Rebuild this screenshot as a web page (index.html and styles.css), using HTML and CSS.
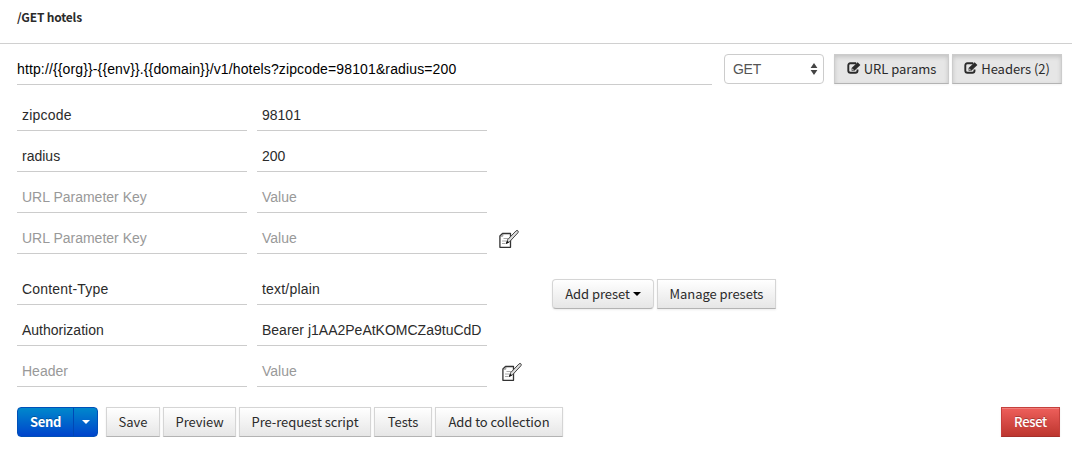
FILE: index.html
```html
<!DOCTYPE html>
<html lang="en">
<head>
<meta charset="utf-8">
<title>Request builder</title>
<link rel="stylesheet" href="styles.css">
</head>
<body>
<svg class="defs" width="0" height="0" aria-hidden="true">
  <symbol id="edit" viewBox="0 0 14 12">
    <path d="M9.2 1.3H3.4Q1.3 1.3 1.3 3.4V8.7Q1.3 10.8 3.4 10.8H8.4Q10.5 10.8 10.5 8.7V7.6" fill="none" stroke="currentColor" stroke-width="1.9"/>
    <path d="M4.6 8.8V6L10.6.3 13.4 3 7.4 8.8z" fill="currentColor"/>
    <path d="M5.6 6.7V7.9H6.8" fill="none" stroke="#e6e6e6" stroke-width=".7"/>
  </symbol>
  <symbol id="bulk" viewBox="0 0 20 20">
    <path d="M3.5 4.5H11.5V18.3H.9V7z" fill="#fff" stroke="#333" stroke-width="1.3" stroke-linejoin="round"/>
    <path d="M3.8 4.8V7.2H1.2" fill="none" stroke="#777" stroke-width=".8"/>
    <path d="M4.5 9.5H9M3 12H7M3 14.5H6.5" stroke="#aaa" stroke-width="1"/>
    <path d="M7.3 14.5 8.5 10.8 17 1.9Q18.2 1 19 1.9 19.7 2.8 18.9 3.8L10.5 12.8z" fill="#ddd" stroke="#444" stroke-width="1"/>
    <path d="M7 14.9 8.2 11.7 10 13.3z" fill="#111"/>
  </symbol>
</svg>
<header class="title">/GET hotels</header>
<main class="builder">
  <section class="request">
    <div class="url">http://{{org}}-{{env}}.{{domain}}/v1/hotels?zipcode=98101&amp;radius=200</div>
    <div class="method">GET<svg class="updown" viewBox="0 0 8 12"><path d="M4 0 7.4 5H.6zM4 12 .6 7H7.4z" fill="#444"/></svg></div>
    <div class="btn pressed params"><svg class="edit"><use href="#edit"/></svg><span>URL params</span></div>
    <div class="btn pressed headers"><svg class="edit"><use href="#edit"/></svg><span>Headers (2)</span></div>
  </section>
  <section class="editor">
    <div class="pairs">
      <div class="field wide">zipcode</div><div class="field">98101</div>
      <div class="field">radius</div><div class="field">200</div>
      <div class="field empty">URL Parameter Key</div><div class="field empty">Value</div>
      <div class="field empty">URL Parameter Key</div><div class="field empty">Value</div>
    </div>
    <svg class="bulk"><use href="#bulk"/></svg>
  </section>
  <section class="editor second">
    <div class="pairs">
      <div class="field wide">Content-Type</div><div class="field wide">text/plain</div>
      <div class="field">Authorization</div><div class="field">Bearer j1AA2PeAtKOMCZa9tuCdD</div>
      <div class="field empty">Header</div><div class="field empty">Value</div>
    </div>
    <svg class="bulk low"><use href="#bulk"/></svg>
    <div class="presets">
      <div class="btn add"><span>Add preset</span><i class="caret"></i></div>
      <div class="btn manage"><span>Manage presets</span></div>
    </div>
  </section>
  <footer class="actions">
    <div class="send"><b class="send-label">Send</b><span class="send-menu"><i class="caret"></i></span></div>
    <div class="btn save"><span>Save</span></div>
    <div class="btn preview"><span>Preview</span></div>
    <div class="btn script"><span>Pre-request script</span></div>
    <div class="btn tests"><span>Tests</span></div>
    <div class="btn collect"><span>Add to collection</span></div>
    <div class="btn reset"><span>Reset</span></div>
  </footer>
</main>
</body>
</html>
```
FILE: styles.css
```css
* { box-sizing: border-box; }
body {
  margin: 0;
  background: #fff;
  color: #2b2b2b;
  font: 14px/20px "Liberation Sans", Arial, sans-serif;
}
.defs { position: absolute; }
.title {
  height: 44px;
  padding: 7px 17px 0;
  border-bottom: 1px solid #d0d0d0;
  font: bold 12px/20px "Noto Sans CJK SC", sans-serif;
  letter-spacing: -.2px;
}
.builder { padding: 10px 10px 0 17px; }
.request { display: flex; align-items: flex-start; height: 46px; }
.url {
  width: 695px;
  height: 31px;
  margin-right: 12px;
  padding-top: 5px;
  border-bottom: 1px solid #ccc;
  color: #000;
  letter-spacing: .13px;
  white-space: nowrap;
}
.method {
  display: flex;
  justify-content: space-between;
  width: 100px;
  height: 30px;
  margin-right: 10px;
  padding: 4px 5px 0 8px;
  border: 1px solid #ccc;
  border-radius: 4px;
  color: #555;
  letter-spacing: -.3px;
}
.updown { width: 8px; height: 12px; margin-top: 4px; }
.btn {
  display: flex;
  align-items: center;
  justify-content: center;
  flex: none;
  height: 30px;
  border: 1px solid #d5d5d5;
  border-bottom-color: #b3b3b3;
  background: linear-gradient(#fff, #e6e6e6);
  box-shadow: inset 0 1px 0 rgba(255,255,255,.2), 0 1px 2px rgba(0,0,0,.08);
  font: 13px/20px "Noto Sans CJK SC", sans-serif;
  letter-spacing: -.05px;
  white-space: nowrap;
}
.pressed {
  border-color: #ccc;
  border-bottom-color: #b3b3b3;
  background: #e6e6e6;
  box-shadow: inset 0 2px 4px rgba(0,0,0,.15), 0 1px 2px rgba(0,0,0,.05);
}
.edit { width: 14px; height: 12px; margin: -2px 3px 0 0; }
.params { width: 115px; margin-right: 3px; }
.headers { width: 110px; }
.editor { display: flex; align-items: flex-start; }
.pairs { display: grid; grid-template-columns: 230px 230px; column-gap: 10px; row-gap: 10px; }
.field {
  height: 31px;
  padding: 5px 5px 0;
  border-bottom: 1px solid #ccc;
  overflow: hidden;
  white-space: nowrap;
}
.wide { letter-spacing: .2px; }
.empty { color: #999; }
.bulk { width: 20px; height: 20px; margin: 129px 0 0 12px; }
.second { margin-top: 20px; }
.low { margin: 88px 0 0 15px; }
.presets { display: flex; gap: 3px; margin: 5px 0 0 30px; }
.add { width: 102px; border-radius: 4px; }
.manage { width: 119px; }
.caret {
  width: 0;
  height: 0;
  margin-left: 3px;
  border: 4px solid transparent;
  border-top-color: #000;
  border-bottom: 0;
}
.actions { display: flex; gap: 3px; margin-top: 20px; }
.send {
  display: flex;
  width: 81px;
  height: 30px;
  margin-right: 5px;
  border: 1px solid #0050b8;
  border-radius: 4px;
  background: linear-gradient(#08c, #04c);
  color: #fff;
  text-shadow: 0 -1px 0 rgba(0,0,0,.25);
}
.send-label {
  width: 56px;
  border-right: 1px solid #0048b5;
  font: bold 13px/28px "Noto Sans CJK SC", sans-serif;
  letter-spacing: -.4px;
  text-align: center;
}
.send-menu { display: flex; flex: 1; align-items: center; justify-content: center; }
.send .caret { margin: 0; border-top-color: #fff; }
.save { width: 54px; }
.preview { width: 73px; }
.script { width: 132px; }
.tests { width: 58px; }
.collect { width: 128px; }
.reset {
  width: 59px;
  margin: 0 2px 0 auto;
  border-color: #c5403c;
  border-bottom-color: #a5302b;
  background: linear-gradient(#ee5f5b, #bd362f);
  color: #fff;
  font-weight: 500;
  letter-spacing: -.3px;
  text-shadow: 0 -1px 0 rgba(0,0,0,.25);
}
```
